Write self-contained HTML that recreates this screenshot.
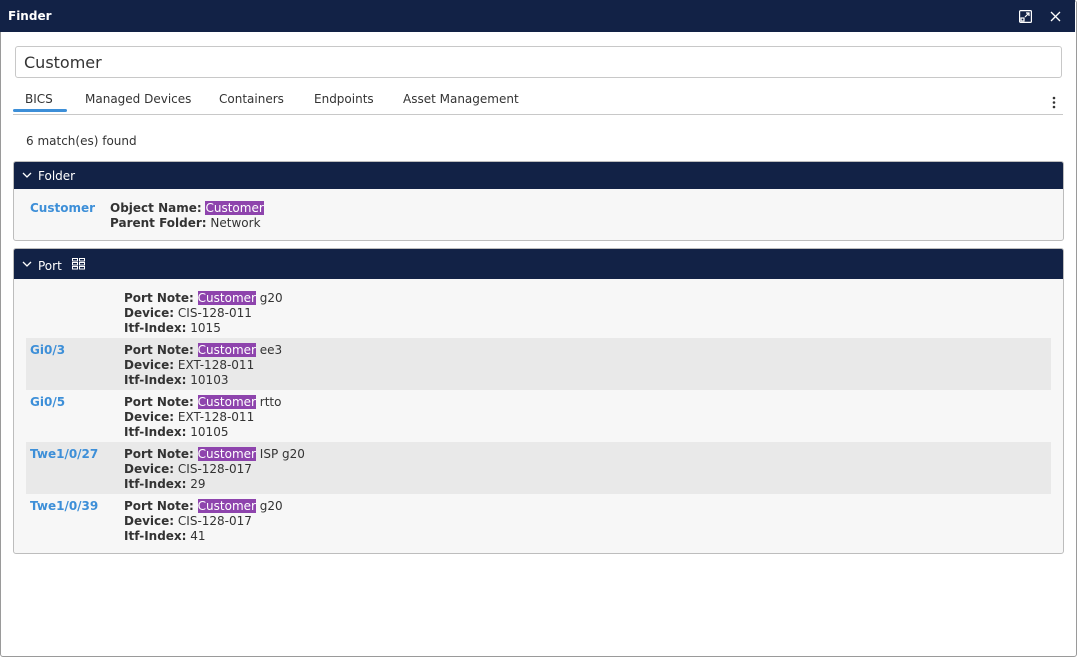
<!DOCTYPE html>
<html><head><style>
*{margin:0;padding:0;box-sizing:border-box}
body{width:1077px;height:657px;background:#fff;font-family:"DejaVu Sans",Verdana,sans-serif;font-size:12px;color:#333;position:relative;overflow:hidden}
.win{position:absolute;left:0;top:0;width:1077px;height:657px;border:1px solid #9a9a9a;border-radius:3px}
.title{position:absolute;left:0;top:0;width:1075px;height:32px;background:#122246;color:#fff;font-weight:bold;font-size:12px;line-height:33px;padding-left:8px}
.inp{position:absolute;left:15px;top:46px;width:1047px;height:32px;border:1px solid #c8c8c8;border-radius:3px;font-size:16px;line-height:32px;padding-left:8px;color:#333}
.tabs{position:absolute;left:13px;top:90px;width:1050px;height:25px;border-bottom:1px solid #c8c8c8}
.tab{position:absolute;top:2px;font-size:12px;color:#333}
.ul{position:absolute;left:0;top:19px;width:54px;height:3px;background:#3d8fd8;border-radius:2px}
.cnt{position:absolute;left:26px;top:134px}
.panel{position:absolute;left:13px;width:1051px;border:1px solid #bdbdbd;border-radius:3px;background:#f7f7f7;overflow:hidden}
.ph{height:27px;background:#122246;color:#fff;line-height:29px;padding-left:24px;position:relative;font-size:12px}
.ph svg.ch{position:absolute;left:8px;top:10px}
.hl{background:#8e44ad;color:#fff}
.lbl{font-weight:bold}
.nm{position:absolute;color:#3d8fd8;font-weight:bold}
.row{position:absolute;left:12px;width:1025px;height:52px}
.row.g{background:#e9e9e9}
.v{position:absolute;left:98px;top:5px;line-height:15px}
.row .nm{left:4px;top:5px;line-height:15px}
</style></head><body>
<div class="win"></div>
<div class="title">Finder
<svg style="position:absolute;left:1019px;top:10px" width="13" height="13" viewBox="0 0 13 13" fill="none" stroke="#fff" stroke-width="1.2"><rect x="0.6" y="0.6" width="11.8" height="11.8" rx="1"/><path d="M6 7L10 3M7 3h3v3"/><rect x="2" y="8" width="3" height="3"/></svg>
<svg style="position:absolute;left:1050px;top:11px" width="11" height="11" viewBox="0 0 11 11" stroke="#fff" stroke-width="1.3"><path d="M1 1L10 10M10 1L1 10"/></svg>
</div>
<div class="inp">Customer</div>
<div class="tabs">
<span class="tab" style="left:12px">BICS</span>
<span class="tab" style="left:72px">Managed Devices</span>
<span class="tab" style="left:206px">Containers</span>
<span class="tab" style="left:301px">Endpoints</span>
<span class="tab" style="left:390px">Asset Management</span>
<div class="ul"></div>
<svg style="position:absolute;left:1039px;top:6px" width="4" height="13"><circle cx="2" cy="2" r="1.3" fill="#333"/><circle cx="2" cy="6.5" r="1.3" fill="#333"/><circle cx="2" cy="11" r="1.3" fill="#333"/></svg>
</div>
<div class="cnt">6 match(es) found</div>

<div class="panel" style="top:161px;height:80px">
<div class="ph"><svg class="ch" width="10" height="7"><path d="M1 1L5 5L9 1" stroke="#fff" stroke-width="1.3" fill="none"/></svg>Folder</div>
<div class="nm" style="left:16px;top:39px">Customer</div>
<div style="position:absolute;left:96px;top:39px;line-height:15px"><span class="lbl">Object Name:</span> <span class="hl">Customer</span><br><span class="lbl">Parent Folder:</span> Network</div>
</div>

<div class="panel" style="top:248px;height:306px">
<div class="ph" style="height:30px;line-height:34px"><svg class="ch" style="top:12px" width="10" height="7"><path d="M1 1L5 5L9 1" stroke="#fff" stroke-width="1.3" fill="none"/></svg>Port
<svg style="position:absolute;left:58px;top:9px" width="13" height="12" fill="none" stroke="#fff" stroke-width="1"><rect x="0.5" y="0.5" width="5" height="2.5"/><rect x="7.5" y="0.5" width="5" height="2.5"/><rect x="0.5" y="4.5" width="5" height="2.5"/><rect x="7.5" y="4.5" width="5" height="2.5"/><rect x="0.5" y="8.5" width="5" height="2.5"/><rect x="7.5" y="8.5" width="5" height="2.5"/></svg></div>
<div class="row" style="top:37px"><div class="v"><span class="lbl">Port Note:</span> <span class="hl">Customer</span> g20<br><span class="lbl">Device:</span> CIS-128-011<br><span class="lbl">Itf-Index:</span> 1015</div></div>
<div class="row g" style="top:89px"><div class="nm">Gi0/3</div><div class="v"><span class="lbl">Port Note:</span> <span class="hl">Customer</span> ee3<br><span class="lbl">Device:</span> EXT-128-011<br><span class="lbl">Itf-Index:</span> 10103</div></div>
<div class="row" style="top:141px"><div class="nm">Gi0/5</div><div class="v"><span class="lbl">Port Note:</span> <span class="hl">Customer</span> rtto<br><span class="lbl">Device:</span> EXT-128-011<br><span class="lbl">Itf-Index:</span> 10105</div></div>
<div class="row g" style="top:193px"><div class="nm">Twe1/0/27</div><div class="v"><span class="lbl">Port Note:</span> <span class="hl">Customer</span> ISP g20<br><span class="lbl">Device:</span> CIS-128-017<br><span class="lbl">Itf-Index:</span> 29</div></div>
<div class="row" style="top:245px"><div class="nm">Twe1/0/39</div><div class="v"><span class="lbl">Port Note:</span> <span class="hl">Customer</span> g20<br><span class="lbl">Device:</span> CIS-128-017<br><span class="lbl">Itf-Index:</span> 41</div></div>
</div>
</body></html>
